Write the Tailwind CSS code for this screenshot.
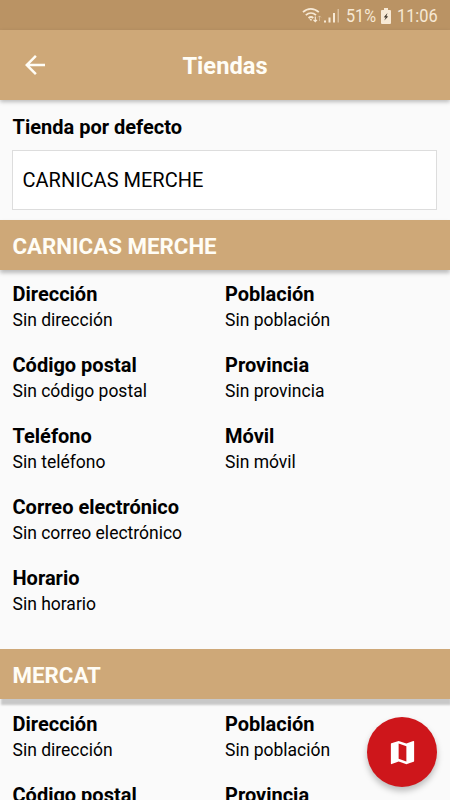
<!DOCTYPE html>
<html lang="es">
<head>
    <meta charset="UTF-8">
    <meta name="viewport" content="width=device-width, initial-scale=1.0">
    <title>Tiendas</title>
    <script src="https://cdn.jsdelivr.net/npm/@tailwindcss/browser@4"></script>
</head>
<body class="bg-[#fafafa] text-black font-[Roboto,sans-serif]">
    <div class="relative flex flex-col h-screen overflow-hidden">
        <!-- Status bar -->
        <div class="h-[30px] shrink-0 bg-[#ba9364] flex items-center justify-end pr-[13.5px] text-[#f7e9d5]">
            <svg class="w-5 h-[18px]" viewBox="0 0 20 18" fill="none" stroke="currentColor" stroke-width="1.8">
                <path d="M1 6.2C5.5 1.8 12 1.8 16.8 6.2M3.8 9.2C7 6.3 11 6.3 14 9.2M6.5 12C8.2 10.6 9.8 10.6 11.3 12" />
                <path d="M7 12.5L9 15L10.2 13.5Z" fill="currentColor" stroke="none" />
                <path d="M13.3 10.5V15.5M11.5 13.8L13.3 15.6L15 13.8" stroke-width="1.2" />
                <path d="M17.5 15V10M16 11.4L17.5 9.9L19 11.4" stroke-width="1" opacity=".45" />
            </svg>
            <svg class="w-4 h-[18px] ml-[2px]" viewBox="0 0 16 18" fill="currentColor">
                <path d="M0 14.5h2v2H0zM4.5 11.5h2v5h-2zM9 7h2v9.5H9z" />
                <path d="M13.5 3H15v13.5h-1.5z" opacity=".5" />
            </svg>
            <span class="ml-[6px] text-[19px] leading-[30px] w-[30px] pt-[1px]"><span class="inline-block origin-left scale-x-[.85]">51%</span></span>
            <svg class="w-[10px] h-4 ml-[5px] mt-[1px]" viewBox="0 0 10 16">
                <path d="M3 0h4v2h2q1 0 1 1v12q0 1-1 1H1q-1 0-1-1V3q0-1 1-1h2z" fill="currentColor" />
                <path d="M6.5 5L2.8 9.3l2 .3L3.2 12.6L7.2 8.6L5.4 8.2z" fill="#40362a" />
            </svg>
            <span class="ml-[6px] text-[19px] leading-[30px] w-10 pt-[1px]"><span class="inline-block origin-left scale-x-[.86]">11:06</span></span>
        </div>

        <!-- Header -->
        <header class="relative h-[70px] shrink-0 bg-[#cea878] text-[#fffdf6] flex items-center justify-center shadow-[0_2px_4px_rgba(0,0,0,0.25)]">
            <button class="absolute left-[20px] top-[20px]">
                <svg class="w-[30px] h-[30px]" viewBox="0 0 24 24" fill="currentColor">
                    <path d="M20 11H7.83l5.59-5.59L12 4l-8 8 8 8 1.41-1.41L7.83 13H20v-2z" />
                </svg>
            </button>
            <h1 class="text-[23.7px] leading-7 font-bold pt-[2px]">Tiendas</h1>
        </header>

        <main class="shrink-0">
            <div class="h-[120px] px-[12.5px] pt-[14px]">
                <label class="block text-[20px] leading-[26px] font-bold">Tienda por defecto</label>
                <div class="mt-[10px] -ml-[0.5px] mr-[0.5px] h-[60px] border border-[#dddddd] bg-white px-[9.5px] text-[20px] leading-[59px]">CARNICAS MERCHE</div>
            </div>

            <!-- Store: CARNICAS MERCHE -->
            <h2 class="h-[50px] bg-[#cea878] text-[#fffdf6] px-[12.5px] text-[22.3px] leading-[52px] font-bold shadow-[0_3px_4px_rgba(0,0,0,0.25)]">CARNICAS MERCHE</h2>
            <dl class="h-[379px] grid grid-cols-2 auto-rows-[70.9px] content-start px-[12.5px] pt-[11.4px] text-[17.5px] leading-[26px]">
                <div><dt class="text-[20px] leading-[26px] font-bold">Dirección</dt><dd>Sin dirección</dd></div>
                <div><dt class="text-[20px] leading-[26px] font-bold">Población</dt><dd>Sin población</dd></div>
                <div><dt class="text-[20px] leading-[26px] font-bold">Código postal</dt><dd>Sin código postal</dd></div>
                <div><dt class="text-[20px] leading-[26px] font-bold">Provincia</dt><dd>Sin provincia</dd></div>
                <div><dt class="text-[20px] leading-[26px] font-bold">Teléfono</dt><dd>Sin teléfono</dd></div>
                <div><dt class="text-[20px] leading-[26px] font-bold">Móvil</dt><dd>Sin móvil</dd></div>
                <div class="col-span-2"><dt class="text-[20px] leading-[26px] font-bold">Correo electrónico</dt><dd>Sin correo electrónico</dd></div>
                <div class="col-span-2"><dt class="text-[20px] leading-[26px] font-bold">Horario</dt><dd>Sin horario</dd></div>
            </dl>

            <!-- Store: MERCAT -->
            <h2 class="h-[50px] bg-[#cea878] text-[#fffdf6] px-[12.5px] text-[22.3px] leading-[52px] font-bold shadow-[1px_6px_2px_rgba(0,0,0,0.2)]">MERCAT</h2>
            <dl class="grid grid-cols-2 auto-rows-[70.9px] px-[12.5px] pt-[11.7px] text-[17.5px] leading-[26px]">
                <div><dt class="text-[20px] leading-[26px] font-bold">Dirección</dt><dd>Sin dirección</dd></div>
                <div><dt class="text-[20px] leading-[26px] font-bold">Población</dt><dd>Sin población</dd></div>
                <div><dt class="text-[20px] leading-[26px] font-bold">Código postal</dt><dd>Sin código postal</dd></div>
                <div><dt class="text-[20px] leading-[26px] font-bold">Provincia</dt><dd>Sin provincia</dd></div>
            </dl>
        </main>

        <!-- Map button -->
        <button class="absolute right-[12.7px] bottom-[12.8px] size-[70px] rounded-full bg-[#ce161b] text-white flex items-center justify-center shadow-[0_4px_6px_rgba(0,0,0,0.25)]">
            <svg class="w-[31px] h-[31px]" viewBox="0 0 24 24" fill="currentColor">
                <path d="M20.5 3l-.16.03L15 5.1 9 3 3.36 4.9c-.21.07-.36.25-.36.48V20.5c0 .28.22.5.5.5l.16-.03L9 18.9l6 2.1 5.64-1.9c.21-.07.36-.25.36-.48V3.5c0-.28-.22-.5-.5-.5zM15 19l-6-2.11V5l6 2.11V19z" />
            </svg>
        </button>
    </div>
</body>
</html>
